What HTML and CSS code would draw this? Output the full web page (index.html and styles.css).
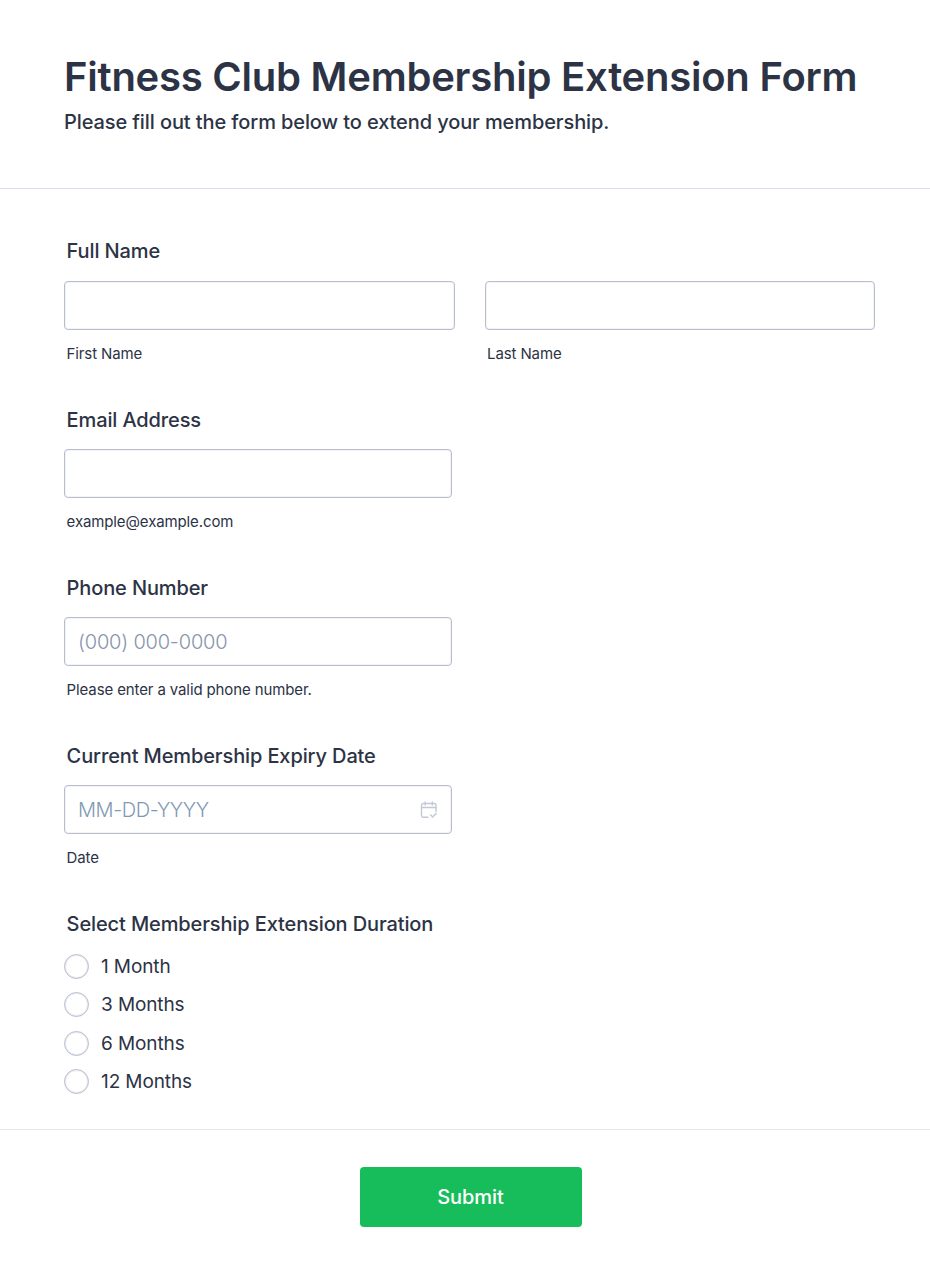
FILE: index.html
```html
<!DOCTYPE html>
<html lang="en">
<head>
<meta charset="utf-8">
<title>Fitness Club Membership Extension Form</title>
<link rel="stylesheet" href="styles.css">
</head>
<body>
<form class="form">
  <header class="header">
    <h1 class="title">Fitness Club Membership Extension Form</h1>
    <p class="subtitle">Please fill out the form below to extend your membership.</p>
  </header>
  <div class="fields">
    <section class="field field-first">
      <div class="label label-first">Full Name</div>
      <div class="name-row">
        <div class="name-col">
          <div class="input"></div>
          <div class="hint">First Name</div>
        </div>
        <div class="name-col">
          <div class="input"></div>
          <div class="hint">Last Name</div>
        </div>
      </div>
    </section>
    <section class="field">
      <div class="label">Email Address</div>
      <div class="input input-half"></div>
      <div class="hint">example@example.com</div>
    </section>
    <section class="field">
      <div class="label">Phone Number</div>
      <div class="input input-half"><span class="placeholder">(000) 000-0000</span></div>
      <div class="hint">Please enter a valid phone number.</div>
    </section>
    <section class="field">
      <div class="label">Current Membership Expiry Date</div>
      <div class="input input-half input-date">
        <span class="placeholder placeholder-date">MM-DD-YYYY</span>
        <svg class="cal" width="18" height="18" viewBox="0 0 18 18" fill="none" stroke="#c3c8d8" stroke-width="1.4" stroke-linecap="round" stroke-linejoin="round">
          <path d="M8 16.3H3.2A1.7 1.7 0 0 1 1.5 14.6V4.2A1.7 1.7 0 0 1 3.2 2.5h11.1a1.7 1.7 0 0 1 1.7 1.7v6.3"/>
          <path d="M1.5 6.5H16"/>
          <path d="M5.2 1v3M12.3 1v3"/>
          <path d="M10.7 14.1l1.9 1.9 3.5-3.6"/>
        </svg>
      </div>
      <div class="hint">Date</div>
    </section>
    <section class="field field-radio">
      <div class="label label-radio">Select Membership Extension Duration</div>
      <div class="radios">
        <div class="radio"><span class="circle"></span><span class="radio-text">1 Month</span></div>
        <div class="radio"><span class="circle"></span><span class="radio-text">3 Months</span></div>
        <div class="radio"><span class="circle"></span><span class="radio-text">6 Months</span></div>
        <div class="radio"><span class="circle"></span><span class="radio-text">12 Months</span></div>
      </div>
    </section>
  </div>
  <footer class="footer">
    <button class="submit" type="button">Submit</button>
  </footer>
</form>
</body>
</html>
```
FILE: styles.css
```css
* { box-sizing: border-box; }
html, body { margin: 0; padding: 0; background: #fff; }
body { font-family: Inter, "Liberation Sans", sans-serif; color: #2c3345; }
.form { width: 930px; height: 1276px; overflow: hidden; }
.header { height: 189px; padding: 53px 40px 0 64px; border-bottom: 1px solid #dcdfe9; }
.title { margin: 0; font-size: 40px; line-height: 48px; font-weight: 600; letter-spacing: -0.24px; white-space: nowrap; }
.subtitle { margin: 8px 0 0; font-size: 20px; line-height: 26px; font-weight: 500; letter-spacing: -0.1px; }
.fields { padding: 49px 55px 0 64px; }
.field { height: 168px; }
.field-first { height: 169px; }
.field-radio { height: auto; }
.label { padding-left: 2.6px; font-size: 20px; line-height: 27px; font-weight: 500; letter-spacing: -0.12px; margin-bottom: 15px; }
.label-first { margin-bottom: 16px; }
.label-radio { margin-bottom: 9.5px; }
.name-row { display: flex; gap: 30px; }
.name-col { flex: 1; }
.input { height: 49px; border: 1px solid #b8bdd0; border-radius: 4px; background: #fff; box-shadow: inset 0 0 0 1px rgba(184, 189, 208, .18); display: flex; align-items: center; padding: 0 13px; }
.input-half { width: 388px; }
.input-date { justify-content: space-between; padding-right: 13px; }
.placeholder { font-size: 20px; font-weight: 300; letter-spacing: -0.2px; color: #8894ab; }
.placeholder-date { letter-spacing: -0.4px; color: #7f99b5; }
.cal { display: block; }
.hint { margin-top: 15px; padding-left: 2.6px; font-size: 15px; line-height: 18px; font-weight: 400; letter-spacing: -0.12px; }
.radios { display: flex; flex-direction: column; }
.radio { display: flex; align-items: center; height: 38.33px; }
.circle { width: 25px; height: 25px; border: 1px solid #b8bdd0; border-radius: 50%; box-shadow: inset 0 0 0 1px rgba(184, 189, 208, .3); flex: none; }
.radio-text { margin-left: 12px; font-size: 19px; font-weight: 400; letter-spacing: -0.1px; }
.footer { margin-top: 28.5px; border-top: 1px solid #e6e8f0; display: flex; justify-content: center; padding: 37px 0 0 11px; }
.submit { width: 222px; height: 60px; border: 0; border-radius: 4px; background: #18bd5b; color: #fff; font-family: inherit; font-size: 20px; font-weight: 500; letter-spacing: -0.05px; padding: 0; }
```
